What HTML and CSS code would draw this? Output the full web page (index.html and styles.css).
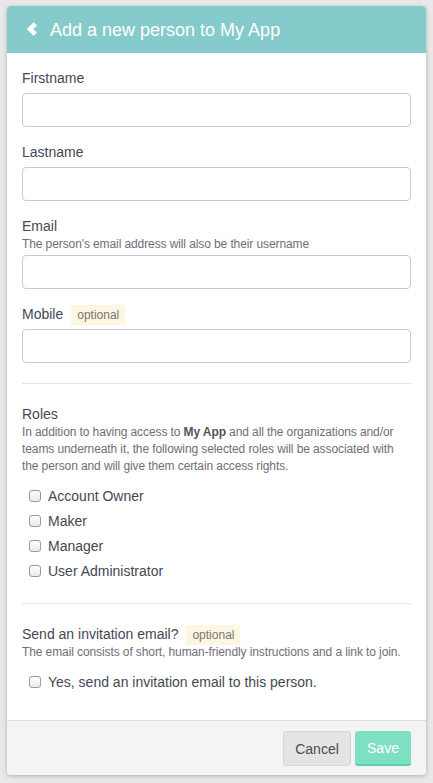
FILE: index.html
```html
<!DOCTYPE html>
<html>
<head>
<meta charset="utf-8">
<link rel="stylesheet" href="styles.css">
</head>
<body>
<div class="modal">
  <div class="modal-header">
    <svg class="back" width="12" height="14" viewBox="0 0 12 14"><path d="M7.6 0.3 L11 3.5 L7.2 7 L11 10.5 L7.6 13.7 L0.8 7 Z" fill="#fff"/></svg>
    <h1 class="title">Add a new person to My App</h1>
  </div>
  <div class="modal-body">
    <div class="group">
      <div class="label">Firstname</div>
      <input class="input" type="text">
    </div>
    <div class="group">
      <div class="label">Lastname</div>
      <input class="input" type="text">
    </div>
    <div class="group">
      <div class="label tight">Email</div>
      <div class="help help-input">The person's email address will also be their username</div>
      <input class="input" type="text">
    </div>
    <div class="group last">
      <div class="label row-label">Mobile <span class="badge">optional</span></div>
      <input class="input" type="text">
    </div>
    <hr class="divider">
    <div class="section">
      <div class="label tight">Roles</div>
      <div class="help">In addition to having access to <b>My App</b> and all the organizations and/or teams underneath it, the following selected roles will be associated with the person and will give them certain access rights.</div>
      <div class="checks">
        <label class="check"><input type="checkbox" class="cb"><span>Account Owner</span></label>
        <label class="check"><input type="checkbox" class="cb"><span>Maker</span></label>
        <label class="check"><input type="checkbox" class="cb"><span>Manager</span></label>
        <label class="check"><input type="checkbox" class="cb"><span>User Administrator</span></label>
      </div>
    </div>
    <hr class="divider">
    <div class="section">
      <div class="label tight row-label">Send an invitation email? <span class="badge">optional</span></div>
      <div class="help">The email consists of short, human-friendly instructions and a link to join.</div>
      <div class="checks">
        <label class="check"><input type="checkbox" class="cb"><span>Yes, send an invitation email to this person.</span></label>
      </div>
    </div>
  </div>
  <div class="modal-footer">
    <button class="btn btn-cancel">Cancel</button>
    <button class="btn btn-save">Save</button>
  </div>
</div>
</body>
</html>
```
FILE: styles.css
```css
html, body {
  margin: 0;
  padding: 0;
}
body {
  background: #e8e8e8;
  font-family: "Liberation Sans", Arial, sans-serif;
  padding: 6px 7px 0 7px;
  height: 783px;
  box-sizing: border-box;
}
.modal {
  width: 419px;
  background: #fff;
  border-radius: 4px;
  box-shadow: 0 1px 4px rgba(0,0,0,0.25);
  overflow: hidden;
}
.modal-header {
  height: 47px;
  background: #85cbcb;
  display: flex;
  align-items: center;
  padding-left: 19px;
  box-sizing: border-box;
}
.back {
  display: block;
  margin-right: 12px;
  margin-top: -1px;
}
.title {
  margin: 0;
  font-size: 18px;
  font-weight: normal;
  color: #fff;
  line-height: 24px;
}
.modal-body {
  padding: 15px 15px 26px 15px;
}
.group {
  margin-bottom: 15px;
}
.group.last {
  margin-bottom: 0;
}
.label {
  font-size: 14px;
  line-height: 20px;
  color: #444854;
  margin-bottom: 5px;
}
.label.tight {
  margin-bottom: 0;
}
.row-label {
  display: flex;
  align-items: center;
  height: 20px;
}
.badge {
  display: block;
  background: #fdf6e1;
  color: #777;
  font-size: 12px;
  line-height: 20px;
  height: 20px;
  padding: 0 6px;
  margin-left: 8px;
  position: relative;
  top: 1px;
}
.help {
  font-size: 12px;
  line-height: 17px;
  color: #716d7a;
  letter-spacing: -0.1px;
}
.help b {
  color: #555;
}
.help-input {
  margin-bottom: 2px;
}
.input {
  display: block;
  width: 100%;
  height: 34px;
  box-sizing: border-box;
  border: 1px solid #cacaca;
  border-radius: 4px;
  background: #fff;
  margin: 0;
}
.divider {
  border: 0;
  border-top: 1px solid #e6e6e6;
  margin: 20px 0 20px 0;
  height: 0;
}
.checks {
  margin-top: 8px;
  padding-left: 7px;
}
.check {
  display: flex;
  align-items: center;
  height: 25px;
  font-size: 14px;
  color: #444854;
}
.cb {
  -webkit-appearance: none;
  appearance: none;
  width: 12px;
  height: 12px;
  margin: 0 7px 0 0;
  border: 1px solid #9a9a9a;
  border-radius: 3px;
  background: linear-gradient(#fdfdfd, #e9e9e9);
  box-sizing: border-box;
}
.modal-footer {
  border-top: 1px solid #dcdcdc;
  background: #f4f4f4;
  height: 55px;
  box-sizing: border-box;
  display: flex;
  justify-content: flex-end;
  align-items: flex-start;
  padding: 10px 15px 0 0;
  gap: 4px;
}
.btn {
  font-family: "Liberation Sans", Arial, sans-serif;
  font-size: 14px;
  height: 35px;
  border-radius: 3px;
  padding: 0;
  margin: 0;
  cursor: pointer;
}
.btn-cancel {
  width: 68px;
  background: #e4e4e4;
  border: 1px solid #d6d6d6;
  color: #4a4a58;
}
.btn-save {
  width: 56px;
  background: #7ee0c3;
  border: 0;
  border-bottom: 2px solid #5ccfa9;
  color: #fff;
}
```
